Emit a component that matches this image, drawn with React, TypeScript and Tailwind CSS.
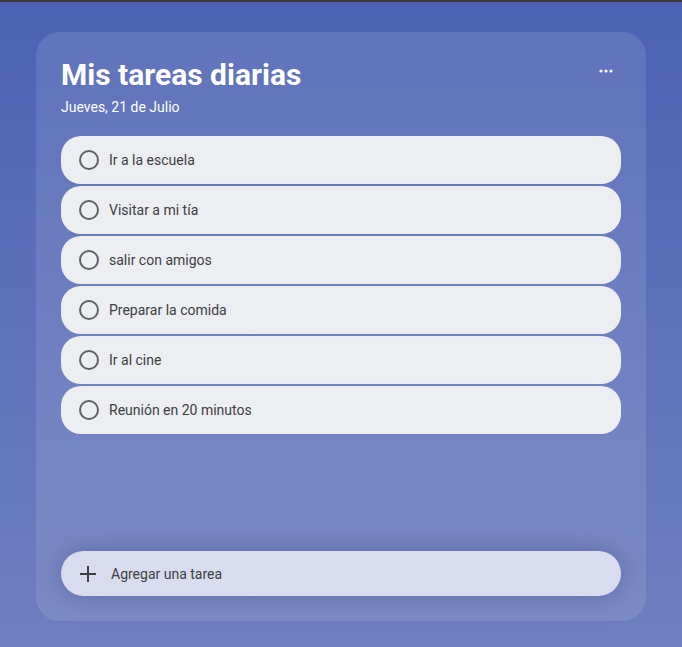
const tasks = [
  "Ir a la escuela",
  "Visitar a mi tía",
  "salir con amigos",
  "Preparar la comida",
  "Ir al cine",
  "Reunión en 20 minutos",
];

const App = () => {
  return (
    <div
      className="h-[647px] w-full border-t-2 border-[#3a3a3a] bg-gradient-to-b from-[#4d62b3] to-[#6f80c1] pt-[30px] px-[36px]"
      style={{ fontFamily: "Roboto, 'Noto Sans', sans-serif" }}
    >
      <div className="flex h-[589px] flex-col rounded-[24px] bg-white/10 p-[25px]">
        {/* header */}
        <div className="flex items-start justify-between">
          <div>
            <h1 className="text-[30px] font-bold leading-[36px] text-white">
              Mis tareas diarias
            </h1>
            <p className="mt-[4px] text-sm leading-5 text-white">
              Jueves, 21 de Julio
            </p>
          </div>
          <svg width="14" height="4" viewBox="0 0 14 4" className="mt-[12px] mr-[8px]">
            <circle cx="2" cy="2" r="1.6" fill="#fff" />
            <circle cx="7" cy="2" r="1.6" fill="#fff" />
            <circle cx="12" cy="2" r="1.6" fill="#fff" />
          </svg>
        </div>

        {/* tasks */}
        <ul className="mt-[19px] flex flex-col gap-[2px]">
          {tasks.map((t) => (
            <li
              key={t}
              className="flex h-12 items-center gap-[10px] rounded-[20px] bg-[#edeef2] pl-[18px] text-sm text-[#3c4043]"
            >
              <span className="h-5 w-5 rounded-full border-2 border-[#5f6368]" />
              {t}
            </li>
          ))}
        </ul>

        <div className="flex-1" />

        {/* add */}
        <div className="flex h-[45px] items-center gap-[15px] rounded-full bg-[#d9dcee] pl-[19px] text-sm text-[#3c4043] shadow-[0_0_28px_rgba(50,60,110,0.4)]">
          <svg width="16" height="16" viewBox="0 0 16 16">
            <path d="M8 0v16M0 8h16" stroke="#3c4043" strokeWidth="2" />
          </svg>
          Agregar una tarea
        </div>
      </div>
    </div>
  );
};

export default App;
